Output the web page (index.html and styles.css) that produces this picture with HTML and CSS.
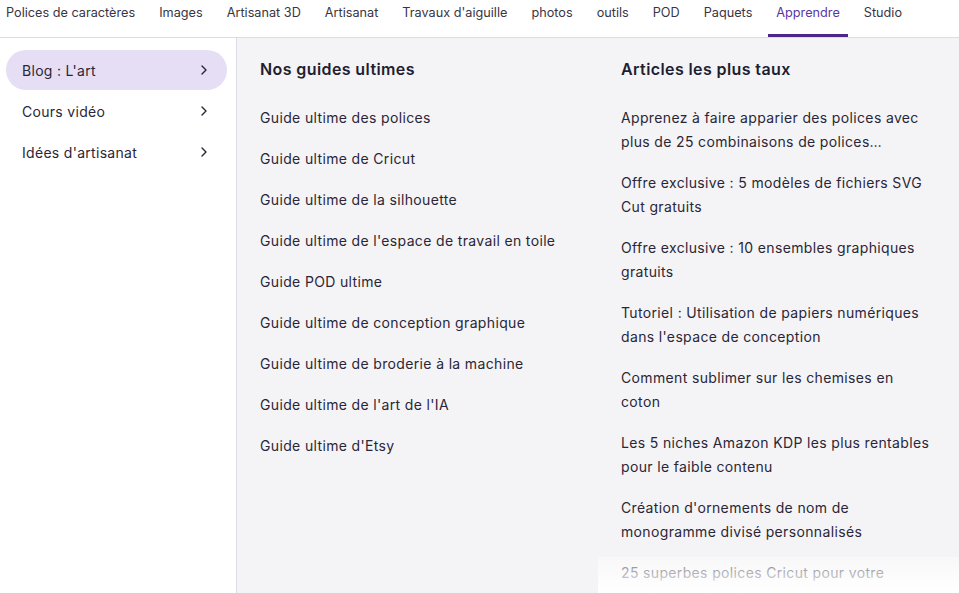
FILE: index.html
```html
<!DOCTYPE html>
<html lang="fr">
<head>
    <meta charset="UTF-8">
    <meta name="viewport" content="width=device-width, initial-scale=1.0">
    <title>Apprendre</title>
    <link rel="stylesheet" href="styles.css">
</head>
<body>
    <nav class="topnav">
        <a class="tab" href="#">Polices de caractères</a>
        <a class="tab" href="#">Images</a>
        <a class="tab" href="#">Artisanat 3D</a>
        <a class="tab" href="#">Artisanat</a>
        <a class="tab" href="#">Travaux d'aiguille</a>
        <a class="tab" href="#">photos</a>
        <a class="tab" href="#">outils</a>
        <a class="tab" href="#">POD</a>
        <a class="tab" href="#">Paquets</a>
        <a class="tab active" href="#">Apprendre</a>
        <a class="tab" href="#">Studio</a>
    </nav>

    <div class="menu">
        <aside class="sidebar">
            <a class="side-item selected" href="#">
                <span>Blog : L'art</span>
                <svg class="chev" width="8" height="12" viewBox="0 0 8 12"><path d="M2 2l4 4-4 4" fill="none" stroke="#2b2637" stroke-width="1.4" stroke-linecap="round" stroke-linejoin="round"/></svg>
            </a>
            <a class="side-item" href="#">
                <span>Cours vidéo</span>
                <svg class="chev" width="8" height="12" viewBox="0 0 8 12"><path d="M2 2l4 4-4 4" fill="none" stroke="#2b2637" stroke-width="1.4" stroke-linecap="round" stroke-linejoin="round"/></svg>
            </a>
            <a class="side-item" href="#">
                <span>Idées d'artisanat</span>
                <svg class="chev" width="8" height="12" viewBox="0 0 8 12"><path d="M2 2l4 4-4 4" fill="none" stroke="#2b2637" stroke-width="1.4" stroke-linecap="round" stroke-linejoin="round"/></svg>
            </a>
        </aside>

        <section class="column">
            <h3>Nos guides ultimes</h3>
            <ul class="links">
                <li><a href="#">Guide ultime des polices</a></li>
                <li><a href="#">Guide ultime de Cricut</a></li>
                <li><a href="#">Guide ultime de la silhouette</a></li>
                <li><a href="#">Guide ultime de l'espace de travail en toile</a></li>
                <li><a href="#">Guide POD ultime</a></li>
                <li><a href="#">Guide ultime de conception graphique</a></li>
                <li><a href="#">Guide ultime de broderie à la machine</a></li>
                <li><a href="#">Guide ultime de l'art de l'IA</a></li>
                <li><a href="#">Guide ultime d'Etsy</a></li>
            </ul>
        </section>

        <section class="column articles">
            <h3>Articles les plus taux</h3>
            <ul class="links">
                <li><a href="#">Apprenez à faire apparier des polices avec plus de 25 combinaisons de polices…</a></li>
                <li><a href="#">Offre exclusive : 5 modèles de fichiers SVG Cut gratuits</a></li>
                <li><a href="#">Offre exclusive : 10 ensembles graphiques gratuits</a></li>
                <li><a href="#">Tutoriel : Utilisation de papiers numériques dans l'espace de conception</a></li>
                <li><a href="#">Comment sublimer sur les chemises en coton</a></li>
                <li><a href="#">Les 5 niches Amazon KDP les plus rentables pour le faible contenu</a></li>
                <li><a href="#">Création d'ornements de nom de monogramme divisé personnalisés</a></li>
                <li><a href="#">25 superbes polices Cricut pour votre prochain projet de cricut</a></li>
            </ul>
            <div class="fade"></div>
        </section>
    </div>
</body>
</html>
```

FILE: styles.css
```css
* {
    box-sizing: border-box;
}

html, body {
    height: 100%;
}

body {
    margin: 0;
    font-family: Inter, "Noto Sans", sans-serif;
    color: #2b2637;
    background: #fff;
    overflow: hidden;
    display: flex;
    flex-direction: column;
}

a {
    color: inherit;
    text-decoration: none;
}

.topnav {
    display: flex;
    gap: 8px;
    height: 38px;
    margin-left: -2px;
    border-bottom: 1px solid #dcdde3;
    flex-shrink: 0;
}

.tab {
    padding: 0 8px;
    font-size: 12.7px;
    line-height: 26px;
    color: #3a3545;
    border-bottom: 3px solid transparent;
    height: 37px;
}

.tab.active {
    color: #5b34a5;
    border-bottom-color: #4a2788;
}

.menu {
    flex: 1;
    display: flex;
    min-height: 0;
}

.sidebar {
    width: 237px;
    flex-shrink: 0;
    padding: 12px 9px 0 6px;
    border-right: 1px solid #dcdce6;
    display: flex;
    flex-direction: column;
    gap: 1px;
}

.side-item {
    display: flex;
    align-items: center;
    justify-content: space-between;
    height: 40px;
    padding: 0 19px 0 16px;
    border-radius: 20px;
    font-size: 14px;
    letter-spacing: 0.3px;
}

.side-item.selected {
    background: #e5def5;
}

.column {
    flex: 1 1 0;
    background: #f4f4f6;
    padding: 19px 24px 0 23px;
    position: relative;
    overflow: hidden;
}

.column h3 {
    margin: 0 0 25px;
    font-size: 16px;
    line-height: 24px;
    font-weight: 600;
    letter-spacing: 0.4px;
    color: #221d30;
}

.links {
    list-style: none;
    margin: 0;
    padding: 0;
    display: flex;
    flex-direction: column;
    gap: 17px;
}

.links li {
    font-size: 14px;
    line-height: 24px;
    letter-spacing: 0.35px;
}

.fade {
    position: absolute;
    left: 0;
    right: 0;
    bottom: 0;
    height: 36px;
    background: linear-gradient(to bottom, rgba(255, 255, 255, 0.35), #fff);
}
```
